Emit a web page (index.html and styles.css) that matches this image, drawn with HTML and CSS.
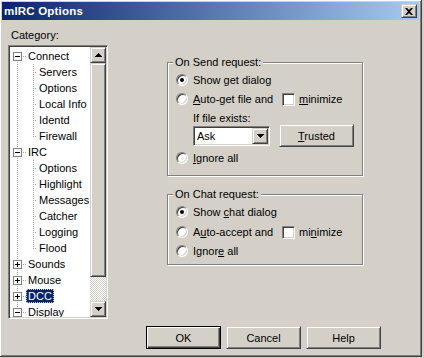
FILE: index.html
```html
<!DOCTYPE html>
<html>
<head>
<meta charset="utf-8">
<link rel="stylesheet" href="styles.css">
</head>
<body>
<div class="window">
  <div class="titlebar">
    <span class="title">mIRC Options</span>
    <span class="close raised"><svg width="8" height="7" viewBox="0 0 8 7"><path d="M0 0h2l2 2 2-2h2L5 3.5 8 7H6L4 5 2 7H0l3-3.5z" fill="#000"/></svg></span>
  </div>
  <div class="body">
    <div class="main">
      <div class="left">
        <div class="cat-label">Category:</div>
        <div class="treebox">
          <div class="tree">
            <div class="row"><span class="cell root first"><i class="box minus"></i></span><span class="lbl">Connect</span></div>
            <div class="row"><span class="cell v"></span><span class="cell c2 t"></span><span class="lbl">Servers</span></div>
            <div class="row"><span class="cell v"></span><span class="cell c2 t"></span><span class="lbl">Options</span></div>
            <div class="row"><span class="cell v"></span><span class="cell c2 t"></span><span class="lbl">Local Info</span></div>
            <div class="row"><span class="cell v"></span><span class="cell c2 t"></span><span class="lbl">Identd</span></div>
            <div class="row"><span class="cell v"></span><span class="cell c2 l"></span><span class="lbl">Firewall</span></div>
            <div class="row"><span class="cell root t"><i class="box minus"></i></span><span class="lbl">IRC</span></div>
            <div class="row"><span class="cell v"></span><span class="cell c2 t"></span><span class="lbl">Options</span></div>
            <div class="row"><span class="cell v"></span><span class="cell c2 t"></span><span class="lbl">Highlight</span></div>
            <div class="row"><span class="cell v"></span><span class="cell c2 t"></span><span class="lbl">Messages</span></div>
            <div class="row"><span class="cell v"></span><span class="cell c2 t"></span><span class="lbl">Catcher</span></div>
            <div class="row"><span class="cell v"></span><span class="cell c2 t"></span><span class="lbl">Logging</span></div>
            <div class="row"><span class="cell v"></span><span class="cell c2 l"></span><span class="lbl">Flood</span></div>
            <div class="row"><span class="cell root t"><i class="box plus"></i></span><span class="lbl">Sounds</span></div>
            <div class="row"><span class="cell root t"><i class="box plus"></i></span><span class="lbl">Mouse</span></div>
            <div class="row"><span class="cell root t"><i class="box plus"></i></span><span class="lbl sel">DCC</span></div>
            <div class="row"><span class="cell root t"><i class="box minus"></i></span><span class="lbl">Display</span></div>
          </div>
          <div class="vscroll">
            <div class="sbtn raised"><svg width="7" height="4" viewBox="0 0 7 4"><path d="M3 0h1v1h1v1h1v1h1v1H0V3h1V2h1V1h1z" fill="#000"/></svg></div>
            <div class="thumb raised"></div>
            <div class="track"></div>
            <div class="sbtn raised"><svg width="7" height="4" viewBox="0 0 7 4"><path d="M0 0h7v1H6v1H5v1H4v1H3V3H2V2H1V1H0z" fill="#000"/></svg></div>
          </div>
        </div>
      </div>
      <div class="right">
        <fieldset class="group g1">
          <legend>On Send request:</legend>
          <div class="opt"><span class="radio on"></span><span>Show <u>g</u>et dialog</span></div>
          <div class="opt"><span class="radio"></span><span class="lab-fixed"><u>A</u>uto-get file and</span><span class="check"></span><span><u>m</u>inimize</span></div>
          <div class="sub">If file exists:</div>
          <div class="combo-row">
            <div class="combo"><span class="val">Ask</span><span class="dd raised"><svg width="7" height="4" viewBox="0 0 7 4"><path d="M0 0h7v1H6v1H5v1H4v1H3V3H2V2H1V1H0z" fill="#000"/></svg></span></div>
            <div class="btn raised"><span><u>T</u>rusted</span></div>
          </div>
          <div class="opt"><span class="radio"></span><span><u>I</u>gnore all</span></div>
        </fieldset>
        <fieldset class="group g2">
          <legend>On Chat request:</legend>
          <div class="opt"><span class="radio on"></span><span>Show <u>c</u>hat dialog</span></div>
          <div class="opt o2"><span class="radio"></span><span class="lab-fixed">A<u>u</u>to-accept and</span><span class="check"></span><span>mi<u>n</u>imize</span></div>
          <div class="opt"><span class="radio"></span><span>Ignor<u>e</u> all</span></div>
        </fieldset>
      </div>
    </div>
    <div class="buttons">
      <div class="btn default">OK</div>
      <div class="btn raised">Cancel</div>
      <div class="btn raised">Help</div>
    </div>
  </div>
</div>
</body>
</html>
```

FILE: styles.css
```css
html, body {
  margin: 0;
  padding: 0;
  background: #D4D0C8;
  overflow: hidden;
}
body {
  font: 11px "Liberation Sans", Arial, sans-serif;
  color: #000;
}
u { text-decoration: underline; text-underline-offset: 1px; }

.raised {
  box-sizing: border-box;
  background: #D4D0C8;
  border: 1px solid;
  border-color: #D4D0C8 #404040 #404040 #D4D0C8;
  box-shadow: inset 1px 1px 0 #fff, inset -1px -1px 0 #808080;
}

.window {
  width: 423px;
  height: 358px;
  margin: -1px 0 0 -1px;
  box-sizing: border-box;
  border: 1px solid;
  border-color: #D4D0C8 #404040 #404040 #D4D0C8;
  box-shadow: inset 1px 1px 0 #fff, inset -1px -1px 0 #808080;
  padding: 2px;
  display: flex;
  flex-direction: column;
  background: #D4D0C8;
}

.titlebar {
  height: 18px;
  flex: none;
  display: flex;
  align-items: center;
  justify-content: space-between;
  background: linear-gradient(to right, #0A246A, #A6CAF0);
  color: #fff;
  font-weight: bold;
  font-size: 11.5px;
  letter-spacing: 0.2px;
  padding-left: 2px;
}
.title { line-height: 18px; }
.close {
  width: 16px;
  height: 14px;
  margin-right: 2px;
  display: flex;
  align-items: center;
  justify-content: center;
}

.body {
  flex: 1;
  display: flex;
  flex-direction: column;
  padding: 9px 38px 0 6px;
}
.main { display: flex; }
.left { width: 100px; flex: none; }
.cat-label { line-height: 13px; margin-bottom: 3px; padding-left: 3px; }

.treebox {
  height: 274px;
  box-sizing: border-box;
  border: 1px solid;
  border-color: #808080 #fff #fff #808080;
  box-shadow: inset 1px 1px 0 #404040, inset -1px -1px 0 #D4D0C8;
  padding: 1px;
  display: flex;
  background: #fff;
}
.tree {
  flex: 1;
  overflow: hidden;
  padding-top: 1px;
  background: #fff;
}
.row {
  display: flex;
  height: 16px;
  white-space: nowrap;
}
.cell {
  flex: none;
  width: 16px;
  height: 16px;
  display: flex;
  background-repeat: no-repeat;
}
.cell.c2 { width: 11px; }
.v {
  background-image: repeating-linear-gradient(to bottom, #a0a0a0 0 1px, transparent 1px 2px);
  background-size: 1px 16px;
  background-position: 7px 0;
}
.t {
  background-image: repeating-linear-gradient(to bottom, #a0a0a0 0 1px, transparent 1px 2px),
                    repeating-linear-gradient(to right, #a0a0a0 0 1px, transparent 1px 2px);
  background-size: 1px 16px, 10px 1px;
  background-position: 7px 0, 7px 8px;
}
.l {
  background-image: repeating-linear-gradient(to bottom, #a0a0a0 0 1px, transparent 1px 2px),
                    repeating-linear-gradient(to right, #a0a0a0 0 1px, transparent 1px 2px);
  background-size: 1px 9px, 10px 1px;
  background-position: 7px 0, 7px 8px;
}
.first {
  background-image: repeating-linear-gradient(to bottom, #a0a0a0 0 1px, transparent 1px 2px),
                    repeating-linear-gradient(to right, #a0a0a0 0 1px, transparent 1px 2px);
  background-size: 1px 8px, 10px 1px;
  background-position: 7px 8px, 7px 8px;
}
.box {
  width: 9px;
  height: 9px;
  box-sizing: border-box;
  margin: 4px 0 0 3px;
  border: 1px solid #808080;
  background-color: #fff;
  background-repeat: no-repeat;
}
.box.minus {
  background-image: linear-gradient(#000, #000);
  background-size: 5px 1px;
  background-position: 1px 3px;
}
.box.plus {
  background-image: linear-gradient(#000, #000), linear-gradient(#000, #000);
  background-size: 5px 1px, 1px 5px;
  background-position: 1px 3px, 3px 1px;
}
.lbl {
  align-self: flex-start;
  margin-top: 1px;
  line-height: 14px;
  height: 14px;
  padding: 0 2px;
}
.lbl.sel {
  background: #0A246A;
  color: #fff;
  outline: 1px dotted #D4D0C8;
  outline-offset: -1px;
}

.vscroll {
  width: 16px;
  flex: none;
  display: flex;
  flex-direction: column;
}
.sbtn {
  height: 16px;
  flex: none;
  display: flex;
  align-items: center;
  justify-content: center;
}
.thumb { height: 214px; flex: none; }
.track {
  flex: 1;
  background-color: #fff;
  background-image: repeating-conic-gradient(#D4D0C8 0 25%, #fff 0 50%);
  background-size: 2px 2px;
}

.right {
  margin-left: 59px;
  margin-top: 27px;
  width: 196px;
}
.group {
  margin: 0;
  padding: 0 0 9px 0;
  min-width: 0;
  width: 196px;
  box-sizing: border-box;
  border: 1px solid #808080;
  box-shadow: inset 1px 1px 0 #fff, 1px 1px 0 #fff;
}
.group legend {
  padding: 0 2px;
  margin-left: 5px;
  line-height: 13px;
  background: #D4D0C8;
}
.g2 { margin-top: 12px; padding-bottom: 5px; }
.g2 .o2 { margin-top: 4px; }

.opt {
  display: flex;
  align-items: center;
  height: 16px;
  margin-top: 3px;
  padding-left: 8px;
  white-space: nowrap;
}
.radio {
  flex: none;
  width: 12px;
  height: 12px;
  box-sizing: border-box;
  border-radius: 50%;
  border: 1px solid;
  border-color: #808080 #fff #fff #808080;
  background: #fff;
  box-shadow: inset 1px 1px 0 #404040, inset -1px -1px 0 #D4D0C8;
  margin-right: 5px;
  display: flex;
  align-items: center;
  justify-content: center;
}
.radio.on::after {
  content: "";
  width: 4px;
  height: 4px;
  border-radius: 50%;
  background: #000;
}
.lab-fixed { width: 89px; flex: none; }
.check {
  flex: none;
  width: 13px;
  height: 13px;
  box-sizing: border-box;
  border: 1px solid;
  border-color: #808080 #fff #fff #808080;
  box-shadow: inset 1px 1px 0 #404040, inset -1px -1px 0 #D4D0C8;
  background: #fff;
  margin-right: 4px;
}
.sub {
  margin: 5px 0 0 25px;
  line-height: 13px;
}
.combo-row {
  display: flex;
  align-items: center;
  gap: 9px;
  height: 23px;
  margin: -1px 0 0 25px;
}
.combo {
  width: 77px;
  height: 20px;
  box-sizing: border-box;
  border: 1px solid;
  border-color: #808080 #fff #fff #808080;
  box-shadow: inset 1px 1px 0 #404040, inset -1px -1px 0 #D4D0C8;
  background: #fff;
  padding: 1px;
  display: flex;
}
.combo .val {
  flex: 1;
  padding-left: 2px;
  line-height: 16px;
}
.combo .dd {
  width: 16px;
  display: flex;
  align-items: center;
  justify-content: center;
}

.btn {
  width: 75px;
  height: 23px;
  box-sizing: border-box;
  display: flex;
  align-items: center;
  justify-content: center;
  background: #D4D0C8;
}
.btn.default {
  border: 1px solid #000;
  box-shadow: inset 1px 1px 0 #fff, inset -1px -1px 0 #404040, inset -2px -2px 0 #808080;
}
.buttons {
  display: flex;
  justify-content: flex-end;
  gap: 5px;
  margin-top: 7px;
}
```
